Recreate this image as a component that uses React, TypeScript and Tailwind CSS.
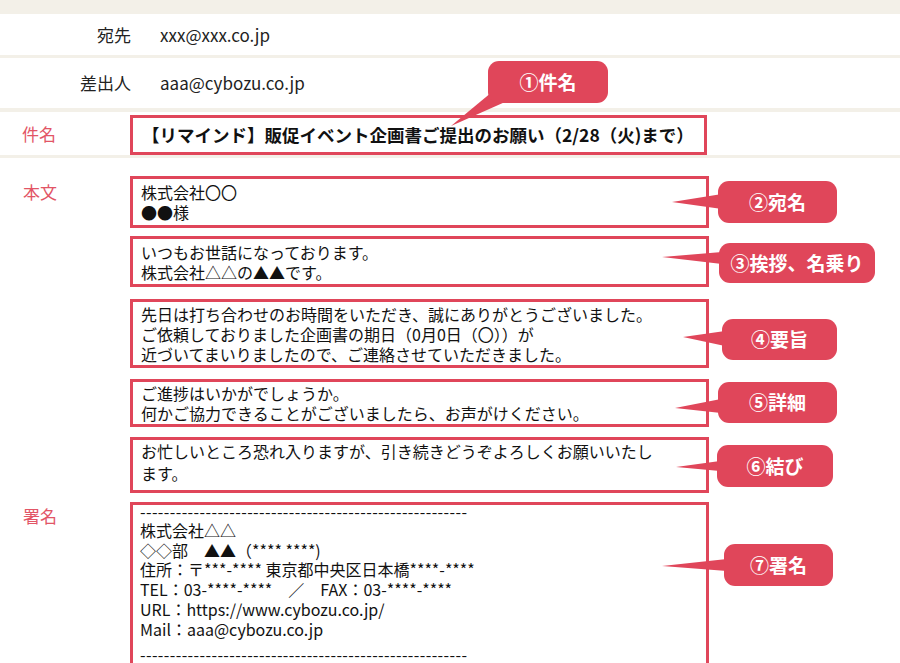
import React from "react";

const RED = "#e0465a";

type Callout = {
  label: string;
  left: number;
  top: number;
  w: number;
  h: number;
  tail: string;
};

const callouts: Callout[] = [
  { label: "①件名", left: 488, top: 61, w: 120, h: 42, tail: "492,92 505,102 451,126" },
  { label: "②宛名", left: 718, top: 181, w: 119, h: 42, tail: "672,202 722,194 722,209" },
  { label: "③挨拶、名乗り", left: 719, top: 243, w: 156, h: 40, tail: "662,257 722,252 722,264" },
  { label: "④要旨", left: 722, top: 319, w: 115, h: 41, tail: "683,337 725,331 725,346" },
  { label: "⑤詳細", left: 718, top: 382, w: 119, h: 41, tail: "675,408 721,399 721,413" },
  { label: "⑥結び", left: 717, top: 445, w: 116, h: 42, tail: "676,467 720,461 720,471" },
  { label: "⑦署名", left: 724, top: 544, w: 109, h: 42, tail: "662,566 727,559 727,571" },
];

function HeaderRow({ label, value, h }: { label: string; value: string; h: string }) {
  return (
    <div className={`flex items-center ${h}`}>
      <div className="w-[131px] text-right text-[17px] text-[#222]">{label}</div>
      <div className="ml-[29px] text-[17px] text-[#222]">{value}</div>
    </div>
  );
}

function Box({ lines, className }: { lines: string[]; className: string }) {
  return (
    <div
      className={`flex w-[579px] flex-col justify-center border-[3px] border-[#e0465a] pl-[8px] text-[16px] leading-[20px] text-[#111] ${className}`}
    >
      {lines.map((l, i) => (
        <div key={i} className="whitespace-pre">
          {l}
        </div>
      ))}
    </div>
  );
}

export default function App() {
  const dashes = "-".repeat(55);
  return (
    <div
      className="relative h-[663px] w-[900px] overflow-hidden bg-white"
      style={{ fontFamily: '"Noto Sans CJK JP", "Noto Sans", sans-serif' }}
    >
      <div className="h-[14px] bg-[#f3f0e8]" />
      <HeaderRow label="宛先" value="xxx@xxx.co.jp" h="h-[41px]" />
      <div className="h-[3px] bg-[#f3f0e8]" />
      <HeaderRow label="差出人" value="aaa@cybozu.co.jp" h="h-[50px]" />
      <div className="h-[4px] bg-[#f3f0e8]" />

      {/* subject */}
      <div className="flex h-[43px]">
        <div className="flex w-[130px] items-center pl-[22px] text-[17px] text-[#e25566]">件名</div>
        <div className="mt-[3px] flex h-[40px] w-[577px] items-center border-[3px] border-[#e0465a] pl-[9px] text-[17.5px] font-bold text-[#111]">
          【リマインド】販促イベント企画書ご提出のお願い（2/28（火)まで）
        </div>
      </div>
      <div className="h-[3px] bg-[#f3f0e8]" />

      {/* body and signature */}
      <div className="grid grid-cols-[130px_579px] pt-[18px]">
        <div className="pl-[23px] pt-[6px] text-[17px] leading-[20px] text-[#e25566]">本文</div>
        <Box className="h-[52px]" lines={["株式会社〇〇", "●●様"]} />

        <div />
        <Box className="mt-[8px] h-[51px]" lines={["いつもお世話になっております。", "株式会社△△の▲▲です。"]} />

        <div />
        <Box
          className="mt-[12px] h-[69px]"
          lines={[
            "先日は打ち合わせのお時間をいただき、誠にありがとうございました。",
            "ご依頼しておりました企画書の期日（0月0日（〇））が",
            "近づいてまいりましたので、ご連絡させていただきました。",
          ]}
        />

        <div />
        <Box
          className="mt-[11px] h-[48px]"
          lines={["ご進捗はいかがでしょうか。", "何かご協力できることがございましたら、お声がけください。"]}
        />

        <div />
        <Box
          className="mt-[10px] h-[56px] !justify-start pt-[0px] !leading-[22px]"
          lines={["お忙しいところ恐れ入りますが、引き続きどうぞよろしくお願いいたし", "ます。"]}
        />

        <div className="pl-[23px] pt-[13px] text-[17px] leading-[20px] text-[#e25566]">署名</div>
        <div className="mt-[9px] h-[200px] w-[579px] border-[3px] border-[#e0465a] pl-[7px] text-[16px] leading-[19.7px] text-[#111]">
          <div className="leading-[12px] tracking-[0.4px]">{dashes}</div>
          <div className="mt-[4px]">株式会社△△</div>
          <div>◇◇部　▲▲（**** ****)</div>
          <div>住所：〒***-**** 東京都中央区日本橋****-****</div>
          <div className="whitespace-pre">TEL：03-****-****　／　FAX：03-****-****</div>
          <div>URL：https://www.cybozu.co.jp/</div>
          <div>Mail：aaa@cybozu.co.jp</div>
          <div className="mt-[6px] tracking-[0.4px]">{dashes}</div>
        </div>
      </div>

      {/* callout tails */}
      <svg className="pointer-events-none absolute left-0 top-0" width="900" height="663">
        {callouts.map((c) => (
          <polygon key={c.label} points={c.tail} fill={RED} />
        ))}
      </svg>

      {/* callout bubbles */}
      {callouts.map((c) => (
        <div
          key={c.label}
          className="absolute flex items-center justify-center rounded-[11px] bg-[#e0465a] text-[19px] font-bold text-white"
          style={{ left: c.left, top: c.top, width: c.w, height: c.h }}
        >
          {c.label}
        </div>
      ))}
    </div>
  );
}
